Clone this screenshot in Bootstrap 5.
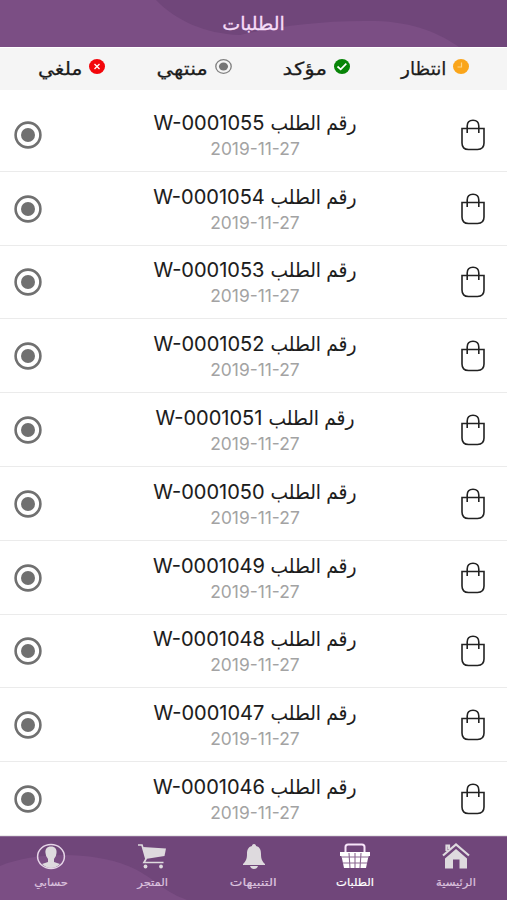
<!DOCTYPE html>
<html lang="ar" dir="rtl">
<head>
<meta charset="utf-8">
<meta name="viewport" content="width=device-width, initial-scale=1">
<title>الطلبات</title>
<link href="https://cdn.jsdelivr.net/npm/bootstrap@5.3.0/dist/css/bootstrap.min.css" rel="stylesheet">
<style>
body{width:507px;height:900px;overflow:hidden;font-family:Inter,"DejaVu Sans",sans-serif;color:#1c1c1c;background:#fff}
svg{display:block;flex:none}
.topbar{height:47px;background:#70467a;position:relative;overflow:hidden;color:#f6dcf8}
.waves{position:absolute;left:0;top:0}
.topbar h1{position:relative;font-size:18px;line-height:47px;margin:0;font-weight:400;-webkit-text-stroke:.3px}
.fit-head{transform:scaleX(1.06)}
.legend-bar{height:43px;background:#f5f5f5;border-top:1px solid #fff;padding:0 38px 0 37px}
.legend-item{gap:7px;font-size:18px;line-height:42px;-webkit-text-stroke:.25px}
.legend-item svg{margin-top:11px}
.legend-item span{display:inline-block;transform-origin:right}
.fit-wait{transform:scaleX(1.02)}
.fit-ok{transform:scaleX(1.2);margin-left:7px}
.fit-end{transform:scaleX(1.17);margin-left:7px}
.fit-no{transform:scaleX(1.13);margin-left:6px}
.orders{padding-top:8px}
.order{height:73.8px;border-bottom:1.5px solid #ebebeb;padding:1px 21.5px 0 13.5px}
.order-text{margin-left:9px;padding-bottom:2px}
.order-title{font-size:20px;line-height:30px;-webkit-text-stroke:.1px}
.ar{display:inline-block;transform:scaleX(.93);transform-origin:right;margin-left:-6px}
.order-date{font-size:17.4px;line-height:22px;color:#a3a3a3}
.tabbar{height:64px;background:#70467a;border-top:1px solid #8d6b95;position:relative;overflow:hidden;color:#dcc3df}
.tab{position:relative;width:20%;padding-top:4px;font-size:11px;line-height:18px;color:#dcc3df;-webkit-text-stroke:.2px}
.tab.current{color:#fff}
.tab svg{margin-bottom:2px}
.tab span{display:inline-block;transform:scaleX(1.05)}
.tab .fit-alerts{transform:scaleX(1.22)}
</style>
</head>
<body class="d-flex flex-column">
<svg width="0" height="0" class="position-absolute">
 <symbol id="bag" viewBox="0 0 24 32"><path d="M1 9.500H23V24Q23 30.500 16.500 30.500H7.500Q1 30.500 1 24ZM6.200 14V7Q6.200 1.200 12 1.200T17.800 7V14" fill="none" stroke="#222" stroke-width="1.600"/></symbol>
 <symbol id="done" viewBox="0 0 28 28"><circle cx="14" cy="14" r="12.400" fill="none" stroke="#707070" stroke-width="2.600"/><circle cx="14" cy="14" r="7" fill="#707070"/></symbol>
</svg>
<header class="topbar text-center">
 <svg class="waves" width="507" height="47"><path d="M0 0H156C175 20 205 34 240 35C275 27 320 20 375 21C415 22 440 34 459 47H0Z" fill="#7b4e84"/></svg>
 <h1><span class="fit-head d-inline-block">الطلبات</span></h1>
</header>
<div class="legend-bar d-flex justify-content-between">
 <div class="legend-item d-flex"><svg width="16" height="15" viewBox="0 0 16 15"><ellipse cx="8" cy="7.500" rx="8" ry="7.400" fill="#faa51a"/><path d="M8.500 3.500V8H4.500" fill="none" stroke="#ffd584" stroke-width="1.200"/></svg><span class="fit-wait">انتظار</span></div>
 <div class="legend-item d-flex"><svg width="16" height="15" viewBox="0 0 16 15"><ellipse cx="8" cy="7.500" rx="8" ry="7.400" fill="#078407"/><path d="M3.500 7.500L6.700 10.300L12.300 4.700" fill="none" stroke="#fff" stroke-width="1.700"/></svg><span class="fit-ok">مؤكد</span></div>
 <div class="legend-item d-flex"><svg width="17" height="15" viewBox="0 0 28 28" preserveAspectRatio="none"><circle cx="14" cy="14" r="12.700" fill="none" stroke="#808080" stroke-width="2.200"/><circle cx="14" cy="14" r="7.500" fill="#757575"/></svg><span class="fit-end">منتهي</span></div>
 <div class="legend-item d-flex"><svg width="16" height="15" viewBox="0 0 16 15"><ellipse cx="8" cy="7.500" rx="8" ry="7.400" fill="#f3060b"/><path d="M5.500 5L10.500 10M10.500 5L5.500 10" fill="none" stroke="#fff" stroke-width="1.300"/></svg><span class="fit-no">ملغي</span></div>
</div>
<main class="orders flex-grow-1" id="orders"></main>
<nav class="tabbar d-flex text-center">
 <svg class="waves" width="507" height="64"><path d="M0 29C35 15 90 14 128 29C155 40 160 54 190 64H0Z" fill="#7b4e84"/></svg>
 <div class="tab d-flex flex-column align-items-center"><svg width="30" height="30" viewBox="0 0 30 30" fill="#dedade"><path d="M15 8L26 17.500V27.500H18.500V18.500H12V27.500H4V17.500Z"/><path d="M2 14.500L15 3.500L28 14.500M5.500 10V4.500H8V8" fill="none" stroke="#dedade" stroke-width="2.200"/></svg><span>الرئيسية</span></div>
 <div class="tab current d-flex flex-column align-items-center"><svg width="30" height="30" viewBox="0 0 30 30"><path d="M5.500 13V6Q5.500 3.500 8 3.500H22Q24.500 3.500 24.500 6V13" fill="none" stroke="#f8e6fa" stroke-width="2"/><path d="M0 11H30V15H28.500L26 27H4L1.500 15H0Z" fill="#fff"/><path d="M2 16H28M3 22H27M9 12L10 27M15 12V27M21 12L20 27" stroke="#8b6892" stroke-width="1.100"/></svg><span>الطلبات</span></div>
 <div class="tab d-flex flex-column align-items-center"><svg width="30" height="30" viewBox="0 0 30 30" fill="#dedade"><path d="M15 3C16.500 3 17 4 17 5C21 6 22 9 22 13C22 18 23 20 26 23V24H4V23C7 20 8 18 8 13C8 9 9 6 13 5C13 4 13.500 3 15 3ZM11 25H19Q18 28 15 28T11 25Z"/></svg><span class="fit-alerts">التنبيهات</span></div>
 <div class="tab d-flex flex-column align-items-center"><svg width="30" height="30" viewBox="0 0 30 30" fill="#dedade"><path d="M6 6L29 7.500L27.500 15L8.500 18Z"/><path d="M1 4H5L9 18L7 21.500H26.500" fill="none" stroke="#dedade" stroke-width="1.700"/><circle cx="8.500" cy="25.500" r="1.900"/><circle cx="24" cy="25.500" r="1.900"/></svg><span>المتجر</span></div>
 <div class="tab d-flex flex-column align-items-center"><svg width="30" height="30" viewBox="0 0 30 30"><ellipse cx="15" cy="15.500" rx="13.400" ry="12" fill="none" stroke="#e6d5e8" stroke-width="1.500"/><path d="M15 5.500C19 5.500 21 8 20.500 12Q20.500 15 18 18V21L24 23Q20 27 15 27T6 23L12 21V18Q9.500 15 9.500 12C9 8 11 5.500 15 5.500Z" fill="#dedade"/></svg><span>حسابي</span></div>
</nav>
<script src="https://cdn.jsdelivr.net/npm/bootstrap@5.3.0/dist/js/bootstrap.bundle.min.js"></script>
<script>
let rows='';
for(let n=1055;n>1045;n--)rows+=`<div class="order d-flex align-items-center justify-content-between"><svg width="26" height="32"><use href="#bag"/></svg><div class="order-text text-center"><div class="order-title"><span class="ar">رقم الطلب</span> <bdi dir="ltr">W-000${n}</bdi></div><div class="order-date" dir="ltr">2019-11-27</div></div><svg width="28" height="28"><use href="#done"/></svg></div>`;
document.getElementById('orders').innerHTML=rows;
</script>
</body>
</html>
